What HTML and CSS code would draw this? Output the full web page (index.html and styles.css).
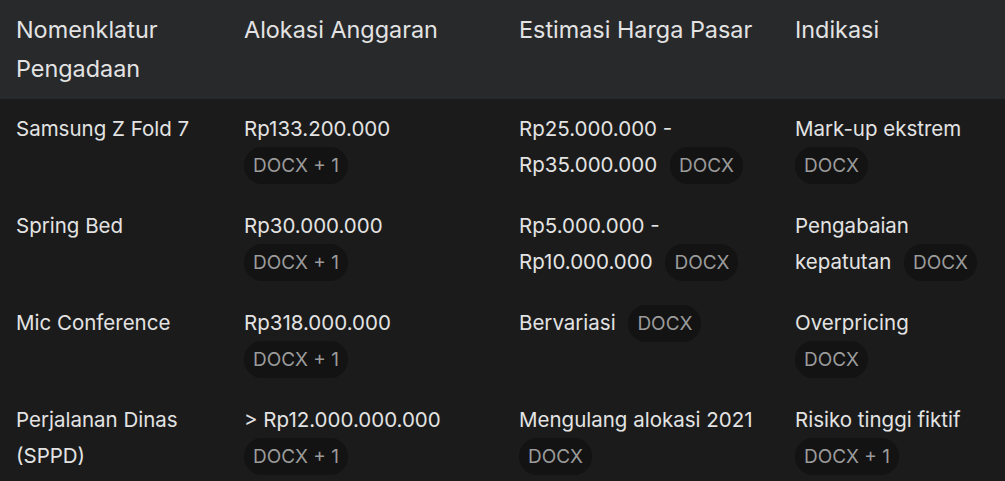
FILE: index.html
```html
<!DOCTYPE html>
<html lang="id">
<head>
    <meta charset="UTF-8">
    <meta name="viewport" content="width=device-width, initial-scale=1.0">
    <title>Tabel Pengadaan</title>
    <link rel="stylesheet" href="styles.css">
</head>
<body>
    <table class="tabel">
        <colgroup>
            <col class="c1">
            <col class="c2">
            <col class="c3">
            <col class="c4">
        </colgroup>
        <thead>
            <tr>
                <th>Nomenklatur Pengadaan</th>
                <th>Alokasi Anggaran</th>
                <th>Estimasi Harga Pasar</th>
                <th>Indikasi</th>
            </tr>
        </thead>
        <tbody>
            <tr>
                <td>Samsung Z Fold 7</td>
                <td><span class="val">Rp133.200.000</span> <span class="chip">DOCX + 1</span></td>
                <td><span class="val">Rp25.000.000 - Rp35.000.000</span> <span class="chip">DOCX</span></td>
                <td><span class="val">Mark-up ekstrem</span> <span class="chip">DOCX</span></td>
            </tr>
            <tr>
                <td>Spring Bed</td>
                <td><span class="val">Rp30.000.000</span> <span class="chip">DOCX + 1</span></td>
                <td><span class="val">Rp5.000.000 - Rp10.000.000</span> <span class="chip">DOCX</span></td>
                <td><span class="val">Pengabaian kepatutan</span> <span class="chip">DOCX</span></td>
            </tr>
            <tr>
                <td>Mic Conference</td>
                <td><span class="val">Rp318.000.000</span> <span class="chip">DOCX + 1</span></td>
                <td><span class="val">Bervariasi</span> <span class="chip">DOCX</span></td>
                <td><span class="val">Overpricing</span> <span class="chip">DOCX</span></td>
            </tr>
            <tr>
                <td>Perjalanan Dinas (SPPD)</td>
                <td><span class="val">&gt; Rp12.000.000.000</span> <span class="chip">DOCX + 1</span></td>
                <td><span class="val">Mengulang alokasi 2021</span> <span class="chip">DOCX</span></td>
                <td><span class="val">Risiko tinggi fiktif</span> <span class="chip">DOCX + 1</span></td>
            </tr>
        </tbody>
    </table>
</body>
</html>
```

FILE: styles.css
```css
* {
    margin: 0;
    padding: 0;
    box-sizing: border-box;
}

body {
    font-family: Inter, "Noto Sans", sans-serif;
    background-color: #1b1b1b;
    color: #e3e3e3;
    overflow: hidden;
}

.tabel {
    width: 1005px;
    border-collapse: collapse;
    table-layout: fixed;
}

.c1 { width: 228px; }
.c2 { width: 275px; }
.c3 { width: 276px; }
.c4 { width: 226px; }

/* Cabecera */
.tabel thead tr {
    background-color: #28292b;
}

.tabel th {
    text-align: left;
    vertical-align: top;
    font-weight: 400;
    font-size: 23.4px;
    line-height: 39px;
    padding: 10px 16px 11px 16px;
}

/* Filas */
.tabel td {
    vertical-align: top;
    font-size: 20.5px;
    line-height: 36px;
    padding: 12px 16px;
    height: 96px;
}

.val {
    margin-right: 7px;
}

.chip {
    display: inline-block;
    background-color: #131313;
    color: #9b9b9b;
    font-size: 19px;
    line-height: 37px;
    padding: 0 9px;
    border-radius: 18px;
}
```
